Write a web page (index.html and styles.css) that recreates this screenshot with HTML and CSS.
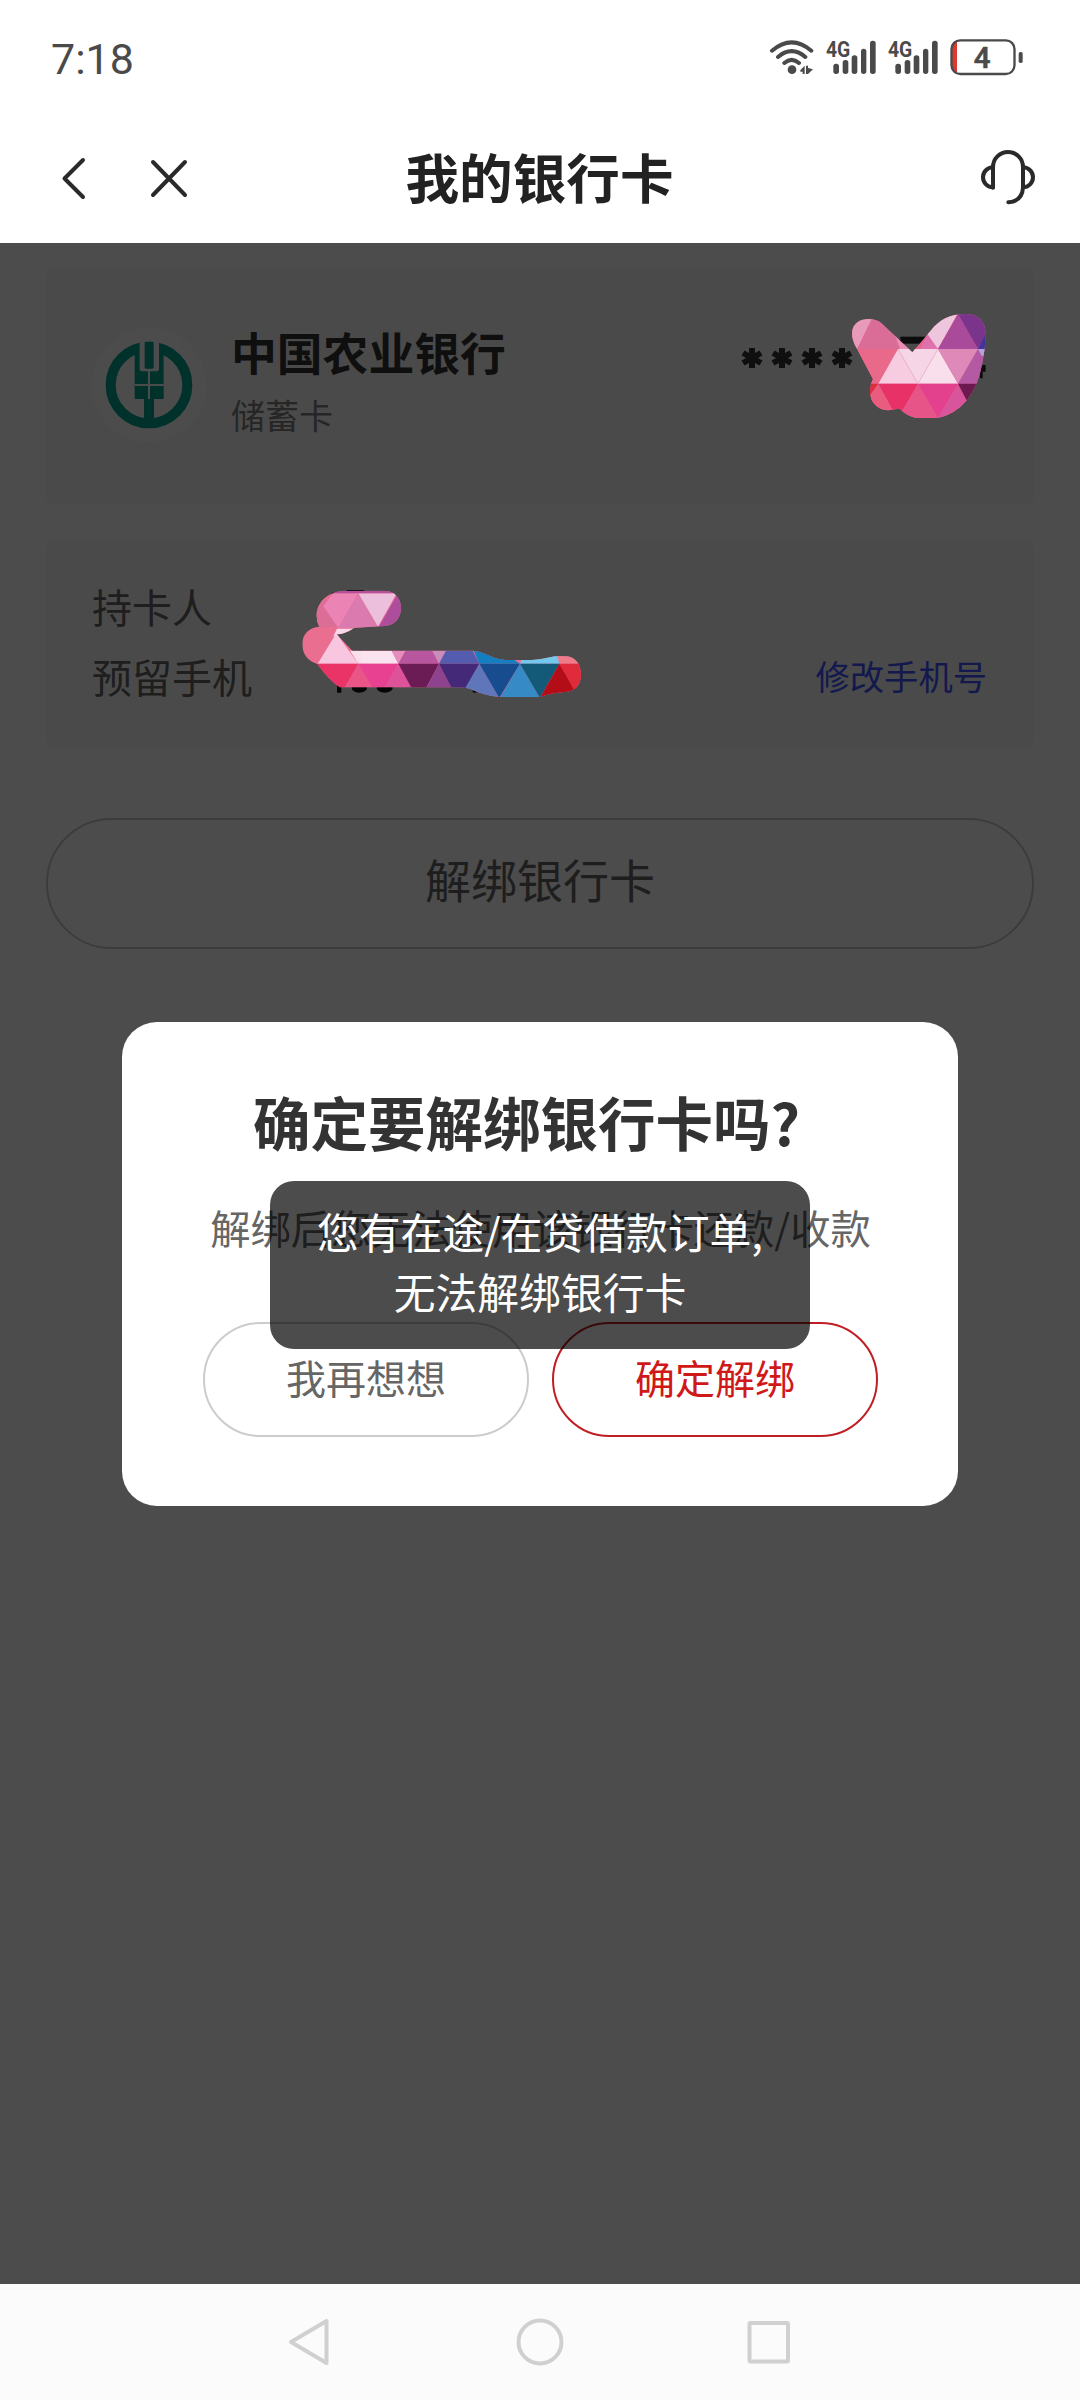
FILE: index.html
```html
<!DOCTYPE html>
<html lang="zh-CN">
<head>
<meta charset="utf-8">
<title>我的银行卡</title>
<link rel="stylesheet" href="styles.css">
</head>
<body>
<div class="screen">
  <div class="status">
    <span class="time">7:18</span>
    <svg class="status-icons" width="260" height="44" viewBox="0 0 780 132">
      <g fill="none" stroke="#4a4a4a" stroke-width="12" stroke-linecap="round">
        <path d="M9 56Q68 6 127 56M27 75Q68 40 109 75M46 93Q68 74 90 93"/>
      </g>
      <g fill="#4a4a4a">
        <circle cx="69" cy="113" r="13"/>
        <path d="M94 115L107 101V126H101V119H94ZM111 101H117V108L132 112L117 126H111Z"/>
        <g id="bars">
          <rect x="193" y="95" width="17" height="31" rx="8"/>
          <rect x="221" y="84" width="17" height="42" rx="8"/>
          <rect x="248" y="70" width="17" height="56" rx="8"/>
          <rect x="276" y="50" width="16" height="76" rx="8"/>
          <rect x="303" y="26" width="17" height="100" rx="8"/>
        </g>
        <use href="#bars" x="186"/>
        <text x="171" y="74" class="net" textLength="73" lengthAdjust="spacingAndGlyphs">4G</text>
        <text x="357" y="74" class="net" textLength="73" lengthAdjust="spacingAndGlyphs">4G</text>
        <rect x="749" y="60" width="12" height="33" rx="5"/>
      </g>
      <path d="M563 29H564V124H563Q548 120 548 103V48Q548 31 563 29Z" fill="#dc3a30"/>
      <rect x="556" y="30" width="8" height="93" fill="#dc3a30"/>
      <rect x="547.500" y="25" width="189" height="101" rx="26" fill="none" stroke="#4a4a4a" stroke-width="7"/>
      <text x="614" y="108" class="level">4</text>
    </svg>
  </div>
  <header class="bar">
    <svg class="back" width="140" height="50" viewBox="0 0 140 50" fill="none" stroke="#2a2a2a" stroke-width="4" stroke-linecap="round" stroke-linejoin="round">
      <path d="M31 6L12.500 24.500L31 43"/>
      <path d="M101 8L133 41M133 8L101 41"/>
    </svg>
    <h1 class="title">我的银行卡</h1>
    <svg class="service" width="60" height="60" viewBox="0 0 180 180" fill="none" stroke="#2a2a2a" stroke-width="12" stroke-linecap="round">
      <path d="M39 143V81A45 45 0 0 1 129 81V142Q127 183 85 187"/>
      <path d="M39 82A30 30 0 0 0 39 142M129 82A30 30 0 0 1 129 142"/>
    </svg>
  </header>
  <main class="page">
    <section class="card bank">
      <svg class="logo" width="120" height="120" viewBox="0 0 360 360">
        <circle cx="180" cy="180" r="172" fill="#fdfdfd"/>
        <circle cx="180" cy="180" r="115" fill="none" stroke="#00a590" stroke-width="30"/>
        <path d="M137 70H224V222H195V290H165V222H137Z" fill="#00a590"/>
        <path d="M152 40H210V131Q210 139 202 139H160Q152 139 152 131Z" fill="#fdfdfd"/>
        <rect x="167" y="50" width="27" height="81" rx="4" fill="#00a590"/>
        <path d="M180 137V222M137 180H224" stroke="#fdfdfd" stroke-width="6"/>
      </svg>
      <div class="bank-text">
        <div class="bank-name">中国农业银行</div>
        <div class="bank-type">储蓄卡</div>
      </div>
      <svg class="stars" width="112" height="22" viewBox="0 0 112 22">
        <g id="star" stroke="#333" stroke-width="6"><path d="M11 1V21M2 6L20 16M2 16L20 6"/></g>
        <use href="#star" x="30"/><use href="#star" x="60"/><use href="#star" x="90"/>
      </svg>
    </section>
    <section class="card info">
      <div class="row"><span>持卡人</span></div>
      <div class="row"><span>预留手机</span><a class="link">修改手机号</a></div>
    </section>
    <button class="unbind">解绑银行卡</button>
    <div class="mask"></div>

    <svg class="sticker one" width="137" height="107" viewBox="390 100 411 321">
      <defs><clipPath id="c1"><path d="M396 160C398 130 420 118 447 118Q470 118 486 132L577 218L632 153C660 118 690 103 737 103C775 103 797 125 797 165Q796 205 788 245Q775 320 741 361Q705 405 652 415H590Q560 410 537 386Q520 392 503 392C470 390 450 365 450 338Q450 315 459 299L408 202Q396 182 396 160Z"/></clipPath></defs>
      <g fill="#0c0c0c"><rect x="541" y="171" width="75" height="21"/><path d="M780 256H797V276H788V296H780Z"/></g>
      <g clip-path="url(#c1)">
        <rect x="390" y="100" width="411" height="321" fill="#e8628c"/>
        <path d="M390 100H464L412 208H390Z" fill="#e79ab9"/>
        <path d="M464 100H500L540 208H412Z" fill="#da6d97"/>
        <path d="M500 100L580 208H540Z" fill="#eb8eb4"/>
        <path d="M412 208H534L475 312H440Z" fill="#e9698b"/>
        <path d="M534 208L475 312H594Z" fill="#f7cbe0"/>
        <path d="M534 208H654L594 312Z" fill="#f5d5e6"/>
        <path d="M654 208L594 312H714Z" fill="#f8dfeb"/>
        <path d="M600 208L628 150L654 208Z" fill="#df72ad"/>
        <path d="M620 160L660 100H714L654 208Z" fill="#edc5dd"/>
        <path d="M714 103L654 208H774Z" fill="#a94a9b"/>
        <path d="M714 103H801V160L774 208Z" fill="#7a348c"/>
        <path d="M801 155L774 208H801Z" fill="#40359a"/>
        <path d="M654 208H774L714 312Z" fill="#de89b8"/>
        <path d="M774 208L714 312H801V208Z" fill="#b45aa3"/>
        <path d="M774 208H801V228H785Z" fill="#b2a5d8"/>
        <path d="M440 312H475L448 350Z" fill="#dc3042"/>
        <path d="M475 312L440 380V421H530Z" fill="#e95c80"/>
        <path d="M475 312H594L540 405L520 395Z" fill="#e83267"/>
        <path d="M594 312L536 415H654Z" fill="#e75488"/>
        <path d="M594 312H714L654 415Z" fill="#e3408e"/>
        <path d="M714 312L654 415H770Z" fill="#d9559b"/>
        <path d="M714 312H774L741 364Z" fill="#6b194f"/>
        <path d="M534 208L594 312L654 208" fill="none" stroke="#dfb5ca" stroke-width="2"/>
      </g>
    </svg>

    <svg class="sticker two" width="284" height="114" viewBox="30 40 852 342">
      <defs><clipPath id="c2"><path d="M80 120C82 80 115 50 165 48H280C315 48 333 70 333 100C333 135 308 153 285 154L194 159Q165 178 140 179L187 228H540C590 228 600 256 660 256H725Q755 254 795 245H825C855 245 873 268 873 300C873 330 855 350 825 352Q780 355 750 367H630Q580 362 540 342Q520 338 480 338H150Q120 320 82 268C55 260 37 240 37 208C37 178 57 158 88 156Q79 140 80 120Z"/></clipPath></defs>
      <g fill="#050505"><path d="M109 68L122 60L127 54H138V68L120 76ZM170 46H222V54H170ZM141 325H154V354H141Z"/><ellipse cx="208" cy="340" rx="23" ry="14"/><ellipse cx="284" cy="340" rx="24" ry="14"/><ellipse cx="556" cy="350" rx="9" ry="4"/></g>
      <g clip-path="url(#c2)">
        <rect x="30" y="40" width="852" height="342" fill="#ea6e90"/>
        <path d="M75 60H102L145 158H75Z" fill="#dc6d96"/>
        <path d="M100 94L130 56H205L145 160Z" fill="#ec83b5"/>
        <path d="M205 56L145 160H264Z" fill="#da7aae"/>
        <path d="M205 56H320L264 156Z" fill="#ecbfdc"/>
        <path d="M130 40H333V56H130Z" fill="#b44f9b"/>
        <path d="M324 56L264 160H340V56Z" fill="#ad4e9d"/>
        <path d="M141 162H205L185 185H130Z" fill="#f8d7e6"/>
        <path d="M139 176L83 267H205Z" fill="#f8c7df"/>
        <path d="M180 228H225L205 267Z" fill="#fae0ea"/>
        <path d="M222 228H305L325 267H205Z" fill="#fae3ef"/>
        <path d="M305 228H347L325 267Z" fill="#e58ebd"/>
        <path d="M347 228H427L447 267H325Z" fill="#b8569f"/>
        <path d="M427 228H468L447 267Z" fill="#c88cbd"/>
        <path d="M468 228H548L568 267H447Z" fill="#535caf"/>
        <path d="M548 220H620L690 267H568Z" fill="#147fc0"/>
        <path d="M690 267L700 240H805L808 267Z" fill="#72c9ed"/>
        <path d="M800 240H882V267H808Z" fill="#ef7b8a"/>
        <path d="M83 267H205L165 338H100Z" fill="#ea3468"/>
        <path d="M205 267L165 338H246Z" fill="#ea5588"/>
        <path d="M205 267H325L285 338H246Z" fill="#e94192"/>
        <path d="M325 267L285 338H366Z" fill="#dd5298"/>
        <path d="M325 267H447L407 342H366Z" fill="#6b1c54"/>
        <path d="M447 267L407 342H486Z" fill="#8d438d"/>
        <path d="M447 267H568L527 342H486Z" fill="#432978"/>
        <path d="M568 267L520 350L628 370Z" fill="#5f77ba"/>
        <path d="M568 267H690L628 370Z" fill="#174c8e"/>
        <path d="M690 267L630 370H750Z" fill="#368ac5"/>
        <path d="M690 267H808L750 370Z" fill="#125a78"/>
        <path d="M808 267L750 370H860V350Z" fill="#b30e18"/>
        <path d="M808 267H882V360H860Z" fill="#df2b3b"/>
      </g>
    </svg>

    <div class="dialog">
      <h2 class="dialog-title">确定要解绑银行卡吗<span class="mark">?</span></h2>
      <p class="dialog-text">解绑后您无法使用该银行卡还款/收款</p>
      <div class="actions">
        <button class="btn">我再想想</button>
        <button class="btn primary">确定解绑</button>
      </div>
    </div>
    <div class="toast">您有在途/在贷借款订单,<br>无法解绑银行卡</div>
  </main>
  <nav class="nav">
    <svg width="504" height="60" viewBox="0 0 504 60" fill="none" stroke="#d0d0d0" stroke-width="4" stroke-linejoin="round">
      <path d="M38.500 9V51L3 30Z"/>
      <circle cx="252" cy="30" r="21.500"/>
      <rect x="461.500" y="11" width="38.500" height="38.500" rx="1"/>
    </svg>
  </nav>
</div>
</body>
</html>
```
FILE: styles.css
```css
* { box-sizing: border-box; margin: 0; padding: 0; }
body { font-family: "Noto Sans CJK SC", sans-serif; background: #fff; }
button { font-family: inherit; background: none; }
.screen { width: 1080px; height: 2400px; display: flex; flex-direction: column; overflow: hidden; }

.status { height: 113px; display: flex; justify-content: space-between; align-items: flex-start; padding: 33px 47px 0 51px; }
.time { font: 43px/52px Roboto, sans-serif; color: #4a4a4a; }
.status-icons { margin: -1px 4px 0 0; }
.net { font: 700 66px Roboto, sans-serif; }
.level { font: 500 88px Roboto, sans-serif; fill: #4a4a4a; stroke: #4a4a4a; stroke-width: 2px; }

.bar { height: 130px; display: grid; grid-template-columns: 1fr auto 1fr; align-items: center; padding: 0 38px 0 52px; }
.back { margin-top: 1px; }
.title { font-size: 53.600px; line-height: 80px; font-weight: 700; color: #222; margin: -5px 0 0 -15px; }
.service { justify-self: end; overflow: visible; margin-right: 2px; margin-top: -17px; }

.page { position: relative; height: 2041px; padding: 24px 46px; background: #fff; }
.card { background: #f8f8f8; border-radius: 8px; }
.bank { height: 238px; display: flex; align-items: flex-start; padding: 54px 46px; }
.logo { margin-top: 4px; margin-left: -3px; }
.bank-text { margin-top: -4px; margin-left: 22px; flex: 1; }
.bank-name { font-size: 45.800px; line-height: 68px; font-weight: 700; color: #333; }
.bank-type { font-size: 34px; line-height: 50px; color: #808080; margin-top: 5px; }
.stars { margin: 26px 135px 0 0; overflow: visible; }
.info { height: 208px; margin-top: 36px; padding: 30px 46px; }
.row { height: 70px; display: flex; justify-content: space-between; align-items: center; font-size: 40px; color: #666; }
.link { font-size: 34.300px; color: #4055ff; margin: -2px 1px 0 0; }
.unbind { display: block; width: 988px; height: 131px; margin-top: 69px; border: 2px solid #c8c8c8; border-radius: 66px; font-size: 46px; color: #666; padding-bottom: 12px; }
.mask { position: absolute; inset: 0; background: rgba(0, 0, 0, .7); }

.sticker { position: absolute; }
.one { left: 850px; top: 70px; }
.two { left: 300px; top: 345px; }

.dialog { position: absolute; left: 122px; top: 779px; width: 836px; height: 484px; padding: 57px 80px 0 81px; background: #fff; border-radius: 35px; text-align: center; }
.dialog-title { font-size: 57.500px; line-height: 84px; font-weight: 700; color: #333; white-space: nowrap; }
.mark { display: inline-block; width: 1em; text-align: left; }
.dialog-text { font-size: 40.300px; line-height: 60px; color: #666; margin: 34px -20px 0; white-space: nowrap; }
.actions { display: flex; justify-content: space-between; margin-top: 65px; }
.btn { width: 326px; height: 115px; border: 2px solid #ccc; border-radius: 58px; font-size: 40px; color: #666; padding-bottom: 6px; }
.primary { border-color: #bf1e24; color: #d01818; }

.toast { position: absolute; left: 270px; top: 938px; width: 540px; height: 168px; padding: 20px 0; background: rgba(0, 0, 0, .7); border-radius: 24px; text-align: center; font-size: 41.800px; line-height: 60px; color: #fff; white-space: nowrap; }

.nav { height: 116px; background: #fbfbfb; display: flex; justify-content: center; align-items: center; }
```
